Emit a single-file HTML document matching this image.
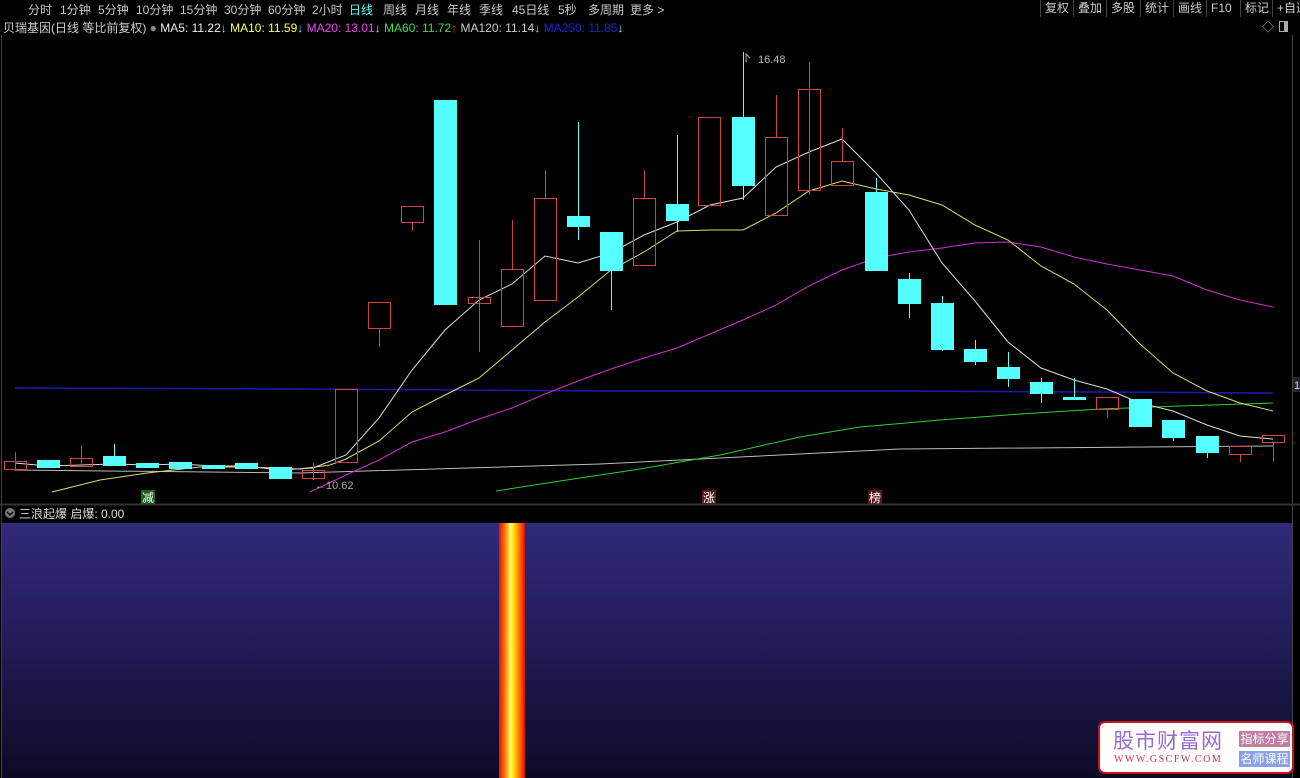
<!DOCTYPE html>
<html><head><meta charset="utf-8"><style>
html,body{margin:0;padding:0;background:#000;width:1300px;height:778px;overflow:hidden;font-family:"Liberation Sans","Noto Sans CJK SC",sans-serif;}
.tb{position:absolute;left:0;top:0;width:1300px;height:17px;background:#000;font-size:12px;color:#c8c8c8;}
.tb span{position:absolute;top:1px;white-space:nowrap}
.rb span{position:absolute;top:0;height:17px;line-height:16px;border-left:1px solid #444;padding-left:4px;font-size:12px;color:#ccc;white-space:nowrap}
.lg{position:absolute;top:19px;left:3px;font-size:12px;white-space:nowrap;color:#ccc}
</style></head><body>
<div style="position:absolute;left:5px;top:3px;width:9px;height:10px;border:1px solid #aaa;box-sizing:border-box;"><div style="width:3px;height:8px;background:#aaa"></div></div>
<div class="tb">
<span style="left:28px">分时</span><span style="left:60px">1分钟</span><span style="left:98px">5分钟</span><span style="left:136px">10分钟</span><span style="left:180px">15分钟</span><span style="left:224px">30分钟</span><span style="left:268px">60分钟</span><span style="left:312px">2小时</span><span style="left:349px;color:#5ff">日线</span><span style="left:383px">周线</span><span style="left:415px">月线</span><span style="left:447px">年线</span><span style="left:479px">季线</span><span style="left:512px">45日线</span><span style="left:558px">5秒</span><span style="left:588px">多周期</span><span style="left:630px">更多 &gt;</span>
</div>
<div class="rb">
<span style="left:1040px">复权</span><span style="left:1073px">叠加</span><span style="left:1106px">多股</span><span style="left:1140px">统计</span><span style="left:1173px">画线</span><span style="left:1206px">F10</span><span style="left:1240px">标记</span><span style="left:1272px">+自选</span>
</div>
<div class="lg">贝瑞基因(日线 等比前复权) <span style="color:#888">●</span> <span style="color:#eee">MA5: 11.22<b style="color:#5ff;font-weight:normal">↓</b></span> <span style="color:#ff6">MA10: 11.59<b style="color:#5ff;font-weight:normal">↓</b></span> <span style="color:#e4e">MA20: 13.01<b style="color:#5ff;font-weight:normal">↓</b></span> <span style="color:#4d4">MA60: 11.72<b style="color:#f44;font-weight:normal">↑</b></span> <span style="color:#ccc">MA120: 11.14<b style="color:#5ff;font-weight:normal">↓</b></span> <span style="color:#22c">MA250: 11.85<b style="color:#5ff;font-weight:normal">↓</b></span></div>
<div style="position:absolute;left:1262px;top:18px;font-size:12px;color:#bbb;white-space:nowrap">◇</div>
<div style="position:absolute;left:1279px;top:21px;width:9px;height:11px;border:1px solid #aaa;box-sizing:border-box;"><div style="margin-left:4px;width:3px;height:9px;background:#aaa"></div></div>
<svg width="1300" height="778" style="position:absolute;left:0;top:0" xmlns="http://www.w3.org/2000/svg">
<defs>
<linearGradient id="bg" x1="0" y1="0" x2="0" y2="1"><stop offset="0" stop-color="#302a7a"/><stop offset="0.5" stop-color="#1f1b55"/><stop offset="1" stop-color="#0c0a24"/></linearGradient>
<linearGradient id="fire" x1="0" y1="0" x2="1" y2="0"><stop offset="0" stop-color="#e01010"/><stop offset="0.2" stop-color="#ff6a00"/><stop offset="0.45" stop-color="#ffff60"/><stop offset="0.6" stop-color="#ffd000"/><stop offset="0.85" stop-color="#ff5000"/><stop offset="1" stop-color="#d01010"/></linearGradient>
</defs>
<line x1="1.5" y1="35" x2="1.5" y2="778" stroke="#444"/>
<line x1="1292.5" y1="35" x2="1292.5" y2="778" stroke="#444"/>
<line x1="0" y1="504.5" x2="1300" y2="504.5" stroke="#333" stroke-width="2"/>
<rect x="2" y="523" width="1290" height="255" fill="url(#bg)"/>
<rect x="499" y="523" width="26" height="255" fill="url(#fire)"/>
<polyline fill="none" stroke="#1a1ab0" stroke-width="1.5" points="15,388 300,389 600,391 900,391 1273,393"/>
<polyline fill="none" stroke="#bbb" stroke-width="1" points="15,470 300,473 600,464 900,449 1273,446"/>
<polyline fill="none" stroke="#3c3" stroke-width="1" points="496,491 560,481 640,469 720,455 800,437 860,427 940,420 1020,414 1100,409 1180,406 1273,403"/>
<polyline fill="none" stroke="#c3c" stroke-width="1" points="310,492 346,475 379,460 412,442 445,432 479,419 512,408 545,394 578,381 611,369 644,358 677,348 710,334 743,320 776,305 809,286 842,270 876,258 909,252 942,248 975,243 1008,242 1041,247 1074,257 1107,264 1140,270 1173,276 1207,290 1240,300 1273,307"/>
<polyline fill="none" stroke="#dd6" stroke-width="1" points="52,492 100,480 147,473 200,467 246,467 300,469 330,465 346,459 379,441 412,412 445,395 479,378 512,350 545,322 578,297 611,270 644,252 677,231 710,230 743,230 776,213 809,191 842,181 876,189 909,195 942,205 975,225 1008,240 1041,266 1074,284 1107,310 1140,344 1173,373 1207,391 1240,403 1273,411"/>
<polyline fill="none" stroke="#ddd" stroke-width="1" points="15,463 48,466 81,465 114,464 147,465 180,464 213,466 246,466 280,470 313,468 346,455 379,418 412,370 445,330 479,300 512,284 545,256 578,263 611,253 644,235 677,222 710,205 743,198 776,167 809,152 842,139 876,173 909,210 942,263 975,301 1008,342 1041,368 1074,380 1107,389 1140,403 1173,411 1207,425 1240,436 1273,439"/>
<g stroke-width="1">
<g fill="none" stroke="#d04444">
<line x1="15.5" y1="452" x2="15.5" y2="470"/><rect x="4.5" y="461.5" width="22" height="8"/>
<line x1="81.5" y1="445" x2="81.5" y2="466"/><rect x="70.5" y="458.5" width="22" height="8"/>
<line x1="313.5" y1="463" x2="313.5" y2="480"/><rect x="302.5" y="470.5" width="22" height="8"/>
<rect x="335.5" y="389.5" width="22" height="73"/>
<line x1="379.5" y1="328" x2="379.5" y2="347"/><rect x="368.5" y="302.5" width="22" height="26"/>
<line x1="412.5" y1="222" x2="412.5" y2="231"/><rect x="401.5" y="206.5" width="22" height="16"/>
<line x1="479.5" y1="240" x2="479.5" y2="352"/><rect x="468.5" y="297.5" width="22" height="6"/>
<line x1="512.5" y1="220" x2="512.5" y2="269"/><rect x="501.5" y="269.5" width="22" height="57"/>
<line x1="545.5" y1="170" x2="545.5" y2="198"/><rect x="534.5" y="198.5" width="22" height="102"/>
<line x1="644.5" y1="170" x2="644.5" y2="198"/><rect x="633.5" y="198.5" width="22" height="67"/>
<rect x="698.5" y="117.5" width="22" height="88"/>
<line x1="776.5" y1="95" x2="776.5" y2="137"/><rect x="765.5" y="137.5" width="22" height="78"/>
<line x1="809.5" y1="62" x2="809.5" y2="195"/><rect x="798.5" y="89.5" width="22" height="101"/>
<line x1="842.5" y1="128" x2="842.5" y2="161"/><rect x="831.5" y="161.5" width="22" height="24"/>
<line x1="1107.5" y1="409" x2="1107.5" y2="418"/><rect x="1096.5" y="397.5" width="22" height="12"/>
<line x1="1240.5" y1="454" x2="1240.5" y2="462"/><rect x="1229.5" y="446.5" width="22" height="8"/>
<line x1="1273.5" y1="442" x2="1273.5" y2="462"/><rect x="1262.5" y="435.5" width="22" height="7"/>
</g>
<g fill="#5ff" stroke="#5ff">
<rect x="37.5" y="460.5" width="22" height="7"/>
<line x1="114.5" y1="444" x2="114.5" y2="456"/><rect x="103.5" y="456.5" width="22" height="9"/>
<rect x="136.5" y="463.5" width="22" height="4"/>
<rect x="169.5" y="462.5" width="22" height="6"/>
<rect x="202.5" y="465.5" width="22" height="3"/>
<rect x="235.5" y="463.5" width="22" height="5"/>
<rect x="269.5" y="467.5" width="22" height="11"/>
<rect x="434.5" y="100.5" width="22" height="204"/>
<line x1="578.5" y1="122" x2="578.5" y2="240"/><rect x="567.5" y="216.5" width="22" height="10"/>
<line x1="611.5" y1="270" x2="611.5" y2="310"/><rect x="600.5" y="232.5" width="22" height="38"/>
<line x1="677.5" y1="135" x2="677.5" y2="232"/><rect x="666.5" y="204.5" width="22" height="16"/>
<line x1="743.5" y1="52" x2="743.5" y2="200"/><rect x="732.5" y="117.5" width="22" height="68"/>
<line x1="876.5" y1="178" x2="876.5" y2="192"/><rect x="865.5" y="192.5" width="22" height="78"/>
<line x1="909.5" y1="273" x2="909.5" y2="318"/><rect x="898.5" y="279.5" width="22" height="24"/>
<line x1="942.5" y1="296" x2="942.5" y2="351"/><rect x="931.5" y="303.5" width="22" height="46"/>
<line x1="975.5" y1="340" x2="975.5" y2="365"/><rect x="964.5" y="349.5" width="22" height="12"/>
<line x1="1008.5" y1="352" x2="1008.5" y2="387"/><rect x="997.5" y="367.5" width="22" height="11"/>
<line x1="1041.5" y1="378" x2="1041.5" y2="403"/><rect x="1030.5" y="382.5" width="22" height="11"/>
<line x1="1074.5" y1="378" x2="1074.5" y2="398"/><rect x="1063.5" y="397.5" width="22" height="2"/>
<rect x="1129.5" y="399.5" width="22" height="27"/>
<line x1="1173.5" y1="437" x2="1173.5" y2="441"/><rect x="1162.5" y="420.5" width="22" height="17"/>
<line x1="1207.5" y1="452" x2="1207.5" y2="458"/><rect x="1196.5" y="436.5" width="22" height="16"/>
</g>
</g>
<polyline points="750,58 746,54 746,62" fill="none" stroke="#aaa"/>
<text x="758" y="63" fill="#bbb" font-size="11" font-family="Liberation Sans">16.48</text>
<text x="315" y="489" fill="#aaa" font-size="11" font-family="Liberation Sans">←10.62</text>
<rect x="1293" y="377" width="7" height="15" fill="#223"/>
<text x="1294" y="389" fill="#ddd" font-size="11" font-family="Liberation Sans">1</text>
<rect x="141" y="490" width="14" height="14" fill="#1b5e20"/>
<text x="142" y="502" fill="#fff" font-size="12" font-family="Noto Sans CJK SC">减</text>
<rect x="702" y="490" width="14" height="14" fill="#5a1a1a"/>
<text x="703" y="502" fill="#fff" font-size="12" font-family="Noto Sans CJK SC">涨</text>
<rect x="868" y="490" width="14" height="14" fill="#5a1a1a"/>
<text x="869" y="502" fill="#fff" font-size="12" font-family="Noto Sans CJK SC">榜</text>
<circle cx="10" cy="513" r="5" fill="#777"/>
<polyline points="7,512 10,515 13,512" fill="none" stroke="#000" stroke-width="1.3"/>
<text x="19" y="518" fill="#ddd" font-size="12" font-family="Liberation Sans, Noto Sans CJK SC">三浪起爆  启爆: 0.00</text>
</svg>
<div style="position:absolute;left:1098px;top:721px;width:196px;height:53px;background:#fff;border:2px solid #d0101a;border-radius:7px;box-sizing:border-box;">
<div style="position:absolute;left:13px;top:5px;font-size:21px;color:#9a6ad0;font-family:'Noto Sans CJK SC',sans-serif;letter-spacing:1px;line-height:24px">股市财富网</div>
<div style="position:absolute;left:14px;top:31px;font-size:10px;color:#d03050;font-family:'Liberation Serif',serif;letter-spacing:1.5px">WWW.GSCFW.COM</div>
<div style="position:absolute;left:139px;top:8px;width:51px;height:16px;background:#c07fa0;color:#fff;font-size:12px;line-height:16px;text-align:center;font-family:'Noto Sans CJK SC',sans-serif">指标分享</div>
<div style="position:absolute;left:139px;top:28px;width:51px;height:16px;background:#8aa0e8;color:#fff;font-size:12px;line-height:16px;text-align:center;font-family:'Noto Sans CJK SC',sans-serif">名师课程</div>
</div>
</body></html>
